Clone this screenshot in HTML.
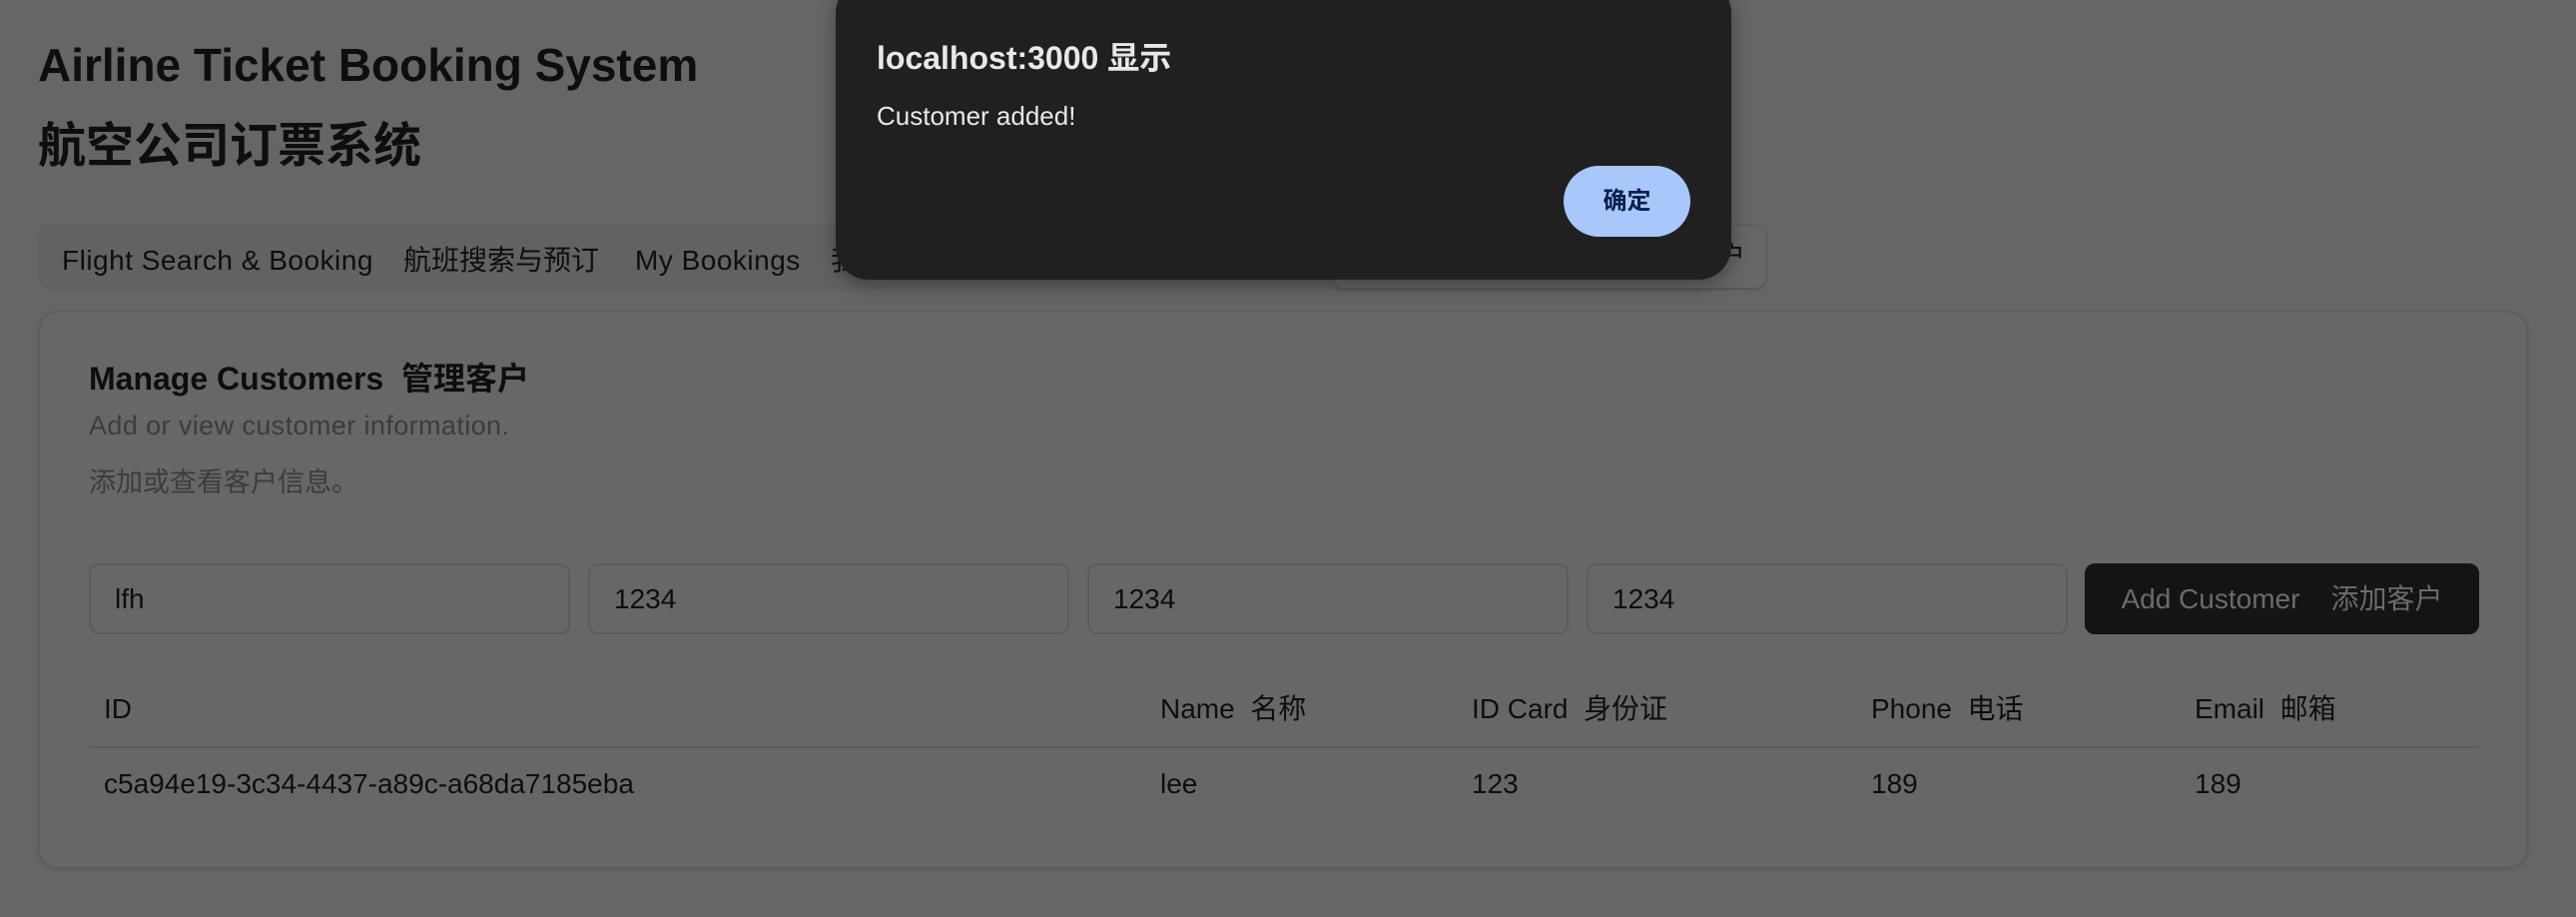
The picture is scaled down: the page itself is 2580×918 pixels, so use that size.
<!DOCTYPE html>
<html><head><meta charset="utf-8"><style>
*{box-sizing:border-box;margin:0;padding:0}
body{width:2580px;height:918px;background:#666;font-family:"Liberation Sans","Noto Sans CJK SC",sans-serif;color:#0e0e0e;position:relative;overflow:hidden}
.a{position:absolute;white-space:nowrap;line-height:1.2}
.tabs{position:absolute;left:38px;top:224px;width:1732px;height:66px;background:#626262;border-radius:12px}
.tabin{position:absolute;left:1336px;top:226px;width:432px;height:62px;background:#676767;border-radius:10px;box-shadow:0 2px 4px rgba(0,0,0,.15)}
.card{position:absolute;left:38px;top:311px;width:2494px;height:558px;border:2px solid #5e5e5e;border-radius:20px;background:#676767;box-shadow:0 2px 5px rgba(0,0,0,.12)}
.inp{position:absolute;top:564px;width:482px;height:71px;border:2px solid #5c5c5c;border-radius:10px;font-size:28px;padding-left:24px;line-height:67px}
.btn{position:absolute;left:2088px;top:564px;width:395px;height:71px;background:#141414;border-radius:10px;color:#6b6b6b;font-size:28px;line-height:71px;text-align:center}
.th,.td{font-size:28px}
.th{top:693px}
.dlg{position:absolute;left:837px;top:-20px;width:897px;height:300px;background:#202020;border-radius:33px;box-shadow:0 6px 20px rgba(0,0,0,.35)}
.ok{position:absolute;left:1566px;top:166px;width:127px;height:71px;background:#a8c7fa;border-radius:36px;color:#0a1f4d;font-size:24px;line-height:71px;text-align:center;font-weight:bold}
.t{font-size:28px;top:244px}
</style></head><body>
<div class="a" style="left:38px;top:38px;font-size:46px;font-weight:bold">Airline Ticket Booking System</div>
<div class="a" style="left:38px;top:118px;font-size:48px;font-weight:bold">航空公司订票系统</div>
<div class="tabs"></div><div class="tabin"></div>
<div class="a t" style="left:62px;letter-spacing:0.5px">Flight Search &amp; Booking</div>
<div class="a t" style="left:404px">航班搜索与预订</div>
<div class="a t" style="left:636px;letter-spacing:0.5px">My Bookings</div>
<div class="a t" style="left:832px">我</div>
<div class="a t" style="left:1720px;top:240px">户</div>
<div class="card"></div>
<div class="a" style="left:89px;top:360px;font-size:32px;font-weight:bold">Manage Customers&nbsp; 管理客户</div>
<div class="a" style="left:89px;top:410px;font-size:27px;color:#3c3c3c;letter-spacing:0.4px">Add or view customer information.</div>
<div class="a" style="left:89px;top:467px;font-size:27px;color:#3c3c3c">添加或查看客户信息。</div>
<div class="inp" style="left:89px">lfh</div>
<div class="inp" style="left:589px">1234</div>
<div class="inp" style="left:1089px">1234</div>
<div class="inp" style="left:1589px">1234</div>
<div class="btn">Add Customer&nbsp;&nbsp;&nbsp; 添加客户</div>
<div class="a th" style="left:104px">ID</div>
<div class="a th" style="left:1162px">Name&nbsp; 名称</div>
<div class="a th" style="left:1474px">ID Card&nbsp; 身份证</div>
<div class="a th" style="left:1874px">Phone&nbsp; 电话</div>
<div class="a th" style="left:2198px">Email&nbsp; 邮箱</div>
<div class="a" style="left:89px;top:747px;width:2394px;height:2px;background:#5a5a5a"></div>
<div class="a td" style="left:104px;top:768px">c5a94e19-3c34-4437-a89c-a68da7185eba</div>
<div class="a td" style="left:1162px;top:768px">lee</div>
<div class="a td" style="left:1474px;top:768px">123</div>
<div class="a td" style="left:1874px;top:768px">189</div>
<div class="a td" style="left:2198px;top:768px">189</div>
<div class="dlg"></div>
<div class="a" style="left:878px;top:39px;font-size:32px;color:#e8e8e8;font-weight:bold">localhost:3000 显示</div>
<div class="a" style="left:878px;top:101px;font-size:26px;color:#e8e8e8">Customer added!</div>
<div class="ok">确定</div>
</body></html>
